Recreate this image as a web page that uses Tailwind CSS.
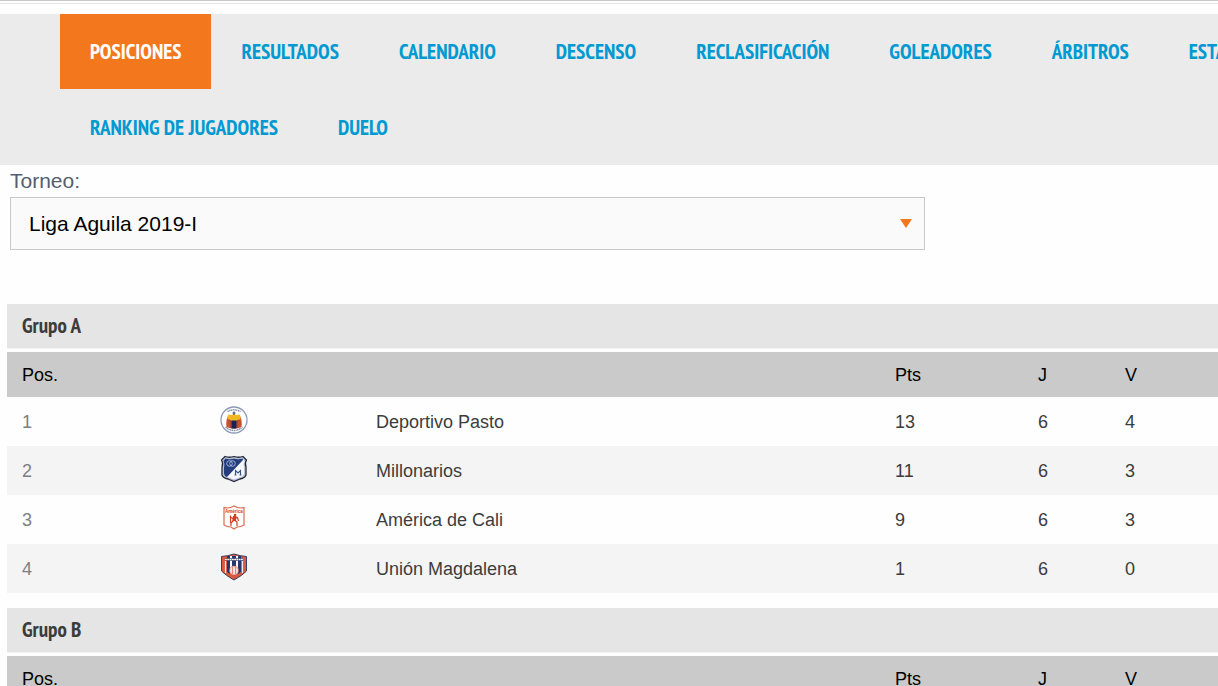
<!DOCTYPE html>
<html lang="es">
<head>
<meta charset="utf-8">
<meta name="viewport" content="width=device-width, initial-scale=1">
<title>Posiciones</title>
<script src="https://cdn.jsdelivr.net/npm/@tailwindcss/browser@4"></script>
</head>
<body class="h-screen overflow-hidden bg-[#fefefe] font-['Liberation_Sans',Arial,sans-serif] text-[18px] leading-6 text-[#3c3c3c]">
<div class="h-1 border-t border-b border-t-[#c8c8c8] border-b-[#e4e4e4]"></div>
<nav class="mt-[10px] overflow-hidden bg-[#ebebeb] pl-[60px] font-['PT_Sans_Narrow','Liberation_Sans_Narrow','Open_Sans',sans-serif] text-[21px] font-bold whitespace-nowrap text-[#0099d1]">
  <ul class="flex h-19 items-start leading-[75px]">
    <li class="shrink-0"><a href="#" aria-current="page" class="block bg-[#f3771c] px-[30px] text-white">POSICIONES</a></li>
    <li class="shrink-0"><a href="#" class="block px-[30px]">RESULTADOS</a></li>
    <li class="shrink-0"><a href="#" class="block px-[30px]">CALENDARIO</a></li>
    <li class="shrink-0"><a href="#" class="block px-[30px]">DESCENSO</a></li>
    <li class="shrink-0"><a href="#" class="block px-[30px]">RECLASIFICACIÓN</a></li>
    <li class="shrink-0"><a href="#" class="block px-[30px]">GOLEADORES</a></li>
    <li class="shrink-0"><a href="#" class="block px-[30px]">ÁRBITROS</a></li>
    <li class="shrink-0"><a href="#" class="block px-[30px]">ESTADÍSTICAS</a></li>
  </ul>
  <ul class="flex leading-[75px]">
    <li class="shrink-0"><a href="#" class="block px-[30px]">RANKING DE JUGADORES</a></li>
    <li class="shrink-0"><a href="#" class="block px-[30px]">DUELO</a></li>
  </ul>
</nav>
<main>
  <div class="ml-[10px] text-[21px]">
    <label for="torneo" class="block leading-8 text-[#555d70]">Torneo:</label>
    <div class="relative w-[915px] max-w-full">
      <select id="torneo" class="block h-[53px] w-full appearance-none border border-[#c8c8c8] bg-[#fafafa] pl-[18px] text-black"><option>Liga Aguila 2019-I</option></select>
      <svg class="pointer-events-none absolute top-[22px] right-[13px] h-[9px] w-[12px]" viewBox="0 0 12 9" aria-hidden="true"><path d="M0 0H12L6 9Z" fill="#f3771c"/></svg>
    </div>
  </div>

  <section class="mt-[54px] ml-[7px]">
    <h2 class="mb-[3px] border-b border-[#f3f3f3] bg-[#e5e5e5] pl-[15px] font-['PT_Sans_Narrow','Liberation_Sans_Narrow','Open_Sans',sans-serif] text-[21px] leading-[44px] font-bold">Grupo A</h2>
    <table class="w-full table-fixed text-left">
      <colgroup><col class="w-[198px]"><col class="w-[156px]"><col class="w-[519px]"><col class="w-[143px]"><col class="w-[87px]"><col></colgroup>
      <thead class="h-[45px] bg-[#cacaca] text-black">
        <tr><th class="px-[15px] font-normal">Pos.</th><th></th><th></th><th class="px-[15px] font-normal">Pts</th><th class="px-[15px] font-normal">J</th><th class="px-[15px] font-normal">V</th></tr>
      </thead>
      <tbody>
        <tr class="h-[49px]">
          <td class="px-[15px] text-[#7c7f85]">1</td>
          <td class="px-[15px]"><svg class="mb-1 block size-7" viewBox="0 0 28 28" role="img" aria-label="Deportivo Pasto">
            <circle cx="14" cy="14" r="13" fill="#fff" stroke="#8e9ab5" stroke-width="1.3"/>
            <path d="M7.500 5.600Q14 2 20.500 5.600M5.500 21Q14 28 22.500 21" fill="none" stroke="#8590ad" stroke-width="1.500" stroke-dasharray="1.300 .5"/>
            <path d="M8 10Q5.500 15 6.500 21Q14 24.500 21.500 21Q22.500 15 20 10Z" fill="#c9502f"/>
            <path d="M8 8.500L12 9L14 7.500L16 9L20 8.500L20.500 13L16 15H12L7.500 13Z" fill="#f1b822"/>
            <path d="M11.500 14.500H16.500V22.500H11.500Z" fill="#182450"/>
            <path d="M14 5.500V9M12.500 7H15.500" stroke="#324376" fill="none"/>
            <path d="M9 14L11 15V22M19 14L17 15V22" stroke="#743442" stroke-width=".7" fill="none"/>
          </svg></td>
          <td class="px-[15px]">Deportivo Pasto</td><td class="px-[15px]">13</td><td class="px-[15px]">6</td><td class="px-[15px]">4</td>
        </tr>
        <tr class="h-[49px] bg-[#f4f4f4]">
          <td class="px-[15px] text-[#7c7f85]">2</td>
          <td class="px-[15px]"><svg class="mb-1 block size-7" viewBox="0 0 28 28" role="img" aria-label="Millonarios">
            <path d="M5 1.500Q9.500 3 14 1.500Q18.500 3 23 1.500L26.500 5Q24.500 8 26 12V20Q25 23 20 24L14 26.500L8 24Q3 23 2 20V12Q3.500 8 1.500 5Z" fill="#b9c1d2" stroke="#222838" stroke-width="1.300"/>
            <path d="M5.500 3.500Q10 5 14 3.500Q18 5 22.500 3.500L24.500 6Q23 9 24 13V19Q23 22 19 22.500L14 24.500L9 22.500Q5 22 4 19V13Q5 9 3.500 6Z" fill="#f6f7fa"/>
            <path d="M5.500 3.500Q10 5 14 3.500Q18 5 22.500 3.500L23 5L7 22Q4 21 4 18V13Q5 9 3.500 6Z" fill="#243d7d"/>
            <circle cx="9.500" cy="8.500" r="2.800" fill="none" stroke="#a9b7d9" stroke-width=".9"/><circle cx="12.500" cy="8.500" r="2.800" fill="none" stroke="#a9b7d9" stroke-width=".9"/>
            <path d="M15.500 20V15.500L18 18L20.500 15.500V20M14.500 20H16.500M19.500 20H21.500" fill="none" stroke="#34508c" stroke-width="1.100"/>
          </svg></td>
          <td class="px-[15px]">Millonarios</td><td class="px-[15px]">11</td><td class="px-[15px]">6</td><td class="px-[15px]">3</td>
        </tr>
        <tr class="h-[49px]">
          <td class="px-[15px] text-[#7c7f85]">3</td>
          <td class="px-[15px]"><svg class="mb-1 block size-7" viewBox="0 0 28 28" role="img" aria-label="América de Cali">
            <path d="M4 3.500Q9 5 14 2Q19 5 24 3.500V21Q21 23 17 23L14 25L11 23Q7 23 4 21Z" fill="#fff" stroke="#d9694f" stroke-width="1.200"/>
            <text x="14" y="8.500" text-anchor="middle" font-family="Liberation Sans" font-size="4.500" font-weight="bold" fill="#ce3b20">América</text>
            <circle cx="15" cy="11" r="1.300" fill="#d13f23"/>
            <path d="M14 12L13 17L11 19V22M14 16L17 18V22M11 13.500L13 14.500L17.500 13.500L18.500 17M10.500 11.500V19" fill="none" stroke="#d13f23" stroke-width="1.200"/>
            <path d="M13 12H16.500L16 17H12.500Z" fill="#d13f23"/>
          </svg></td>
          <td class="px-[15px]">América de Cali</td><td class="px-[15px]">9</td><td class="px-[15px]">6</td><td class="px-[15px]">3</td>
        </tr>
        <tr class="h-[49px] bg-[#f4f4f4]">
          <td class="px-[15px] text-[#7c7f85]">4</td>
          <td class="px-[15px]"><svg class="mb-1 block size-7" viewBox="0 0 28 28" role="img" aria-label="Unión Magdalena">
            <path d="M1.500 3.500Q8 3 14 1Q20 3 26.500 3.500V18Q23 22 14 27Q5 22 1.500 18Z" fill="#d9583f" stroke="#3a3f60"/>
            <path d="M5.500 8V20M22.500 8V20" stroke="#f5e9e6" stroke-width="1.200"/>
            <path d="M7 3H10V21L7 19ZM18 3H21V19L18 21Z" fill="#26376f"/>
            <path d="M10 3H12V20H10ZM16 3H18V20H16Z" fill="#fff"/>
            <path d="M12 3H16V14H12Z" fill="#26376f"/>
            <path d="M5 6.500H23" stroke="#27345f" stroke-width="2.500"/>
            <path d="M5 6.500H23" stroke="#fff" stroke-width="1.300" stroke-dasharray="1.800 .5"/>
            <circle cx="14" cy="17.500" r="4.500" fill="#f7e2dd" stroke="#d9583f" stroke-width=".6"/>
            <path d="M12.500 14V21M15.500 14V21" stroke="#e08573" stroke-width="1"/>
          </svg></td>
          <td class="px-[15px]">Unión Magdalena</td><td class="px-[15px]">1</td><td class="px-[15px]">6</td><td class="px-[15px]">0</td>
        </tr>
      </tbody>
    </table>
  </section>

  <section class="mt-[15px] ml-[7px]">
    <h2 class="mb-[3px] border-b border-[#f3f3f3] bg-[#e5e5e5] pl-[15px] font-['PT_Sans_Narrow','Liberation_Sans_Narrow','Open_Sans',sans-serif] text-[21px] leading-[44px] font-bold">Grupo B</h2>
    <table class="w-full table-fixed text-left">
      <colgroup><col class="w-[198px]"><col class="w-[156px]"><col class="w-[519px]"><col class="w-[143px]"><col class="w-[87px]"><col></colgroup>
      <thead class="h-[45px] bg-[#cacaca] text-black">
        <tr><th class="px-[15px] font-normal">Pos.</th><th></th><th></th><th class="px-[15px] font-normal">Pts</th><th class="px-[15px] font-normal">J</th><th class="px-[15px] font-normal">V</th></tr>
      </thead>
    </table>
  </section>
</main>
</body>
</html>
